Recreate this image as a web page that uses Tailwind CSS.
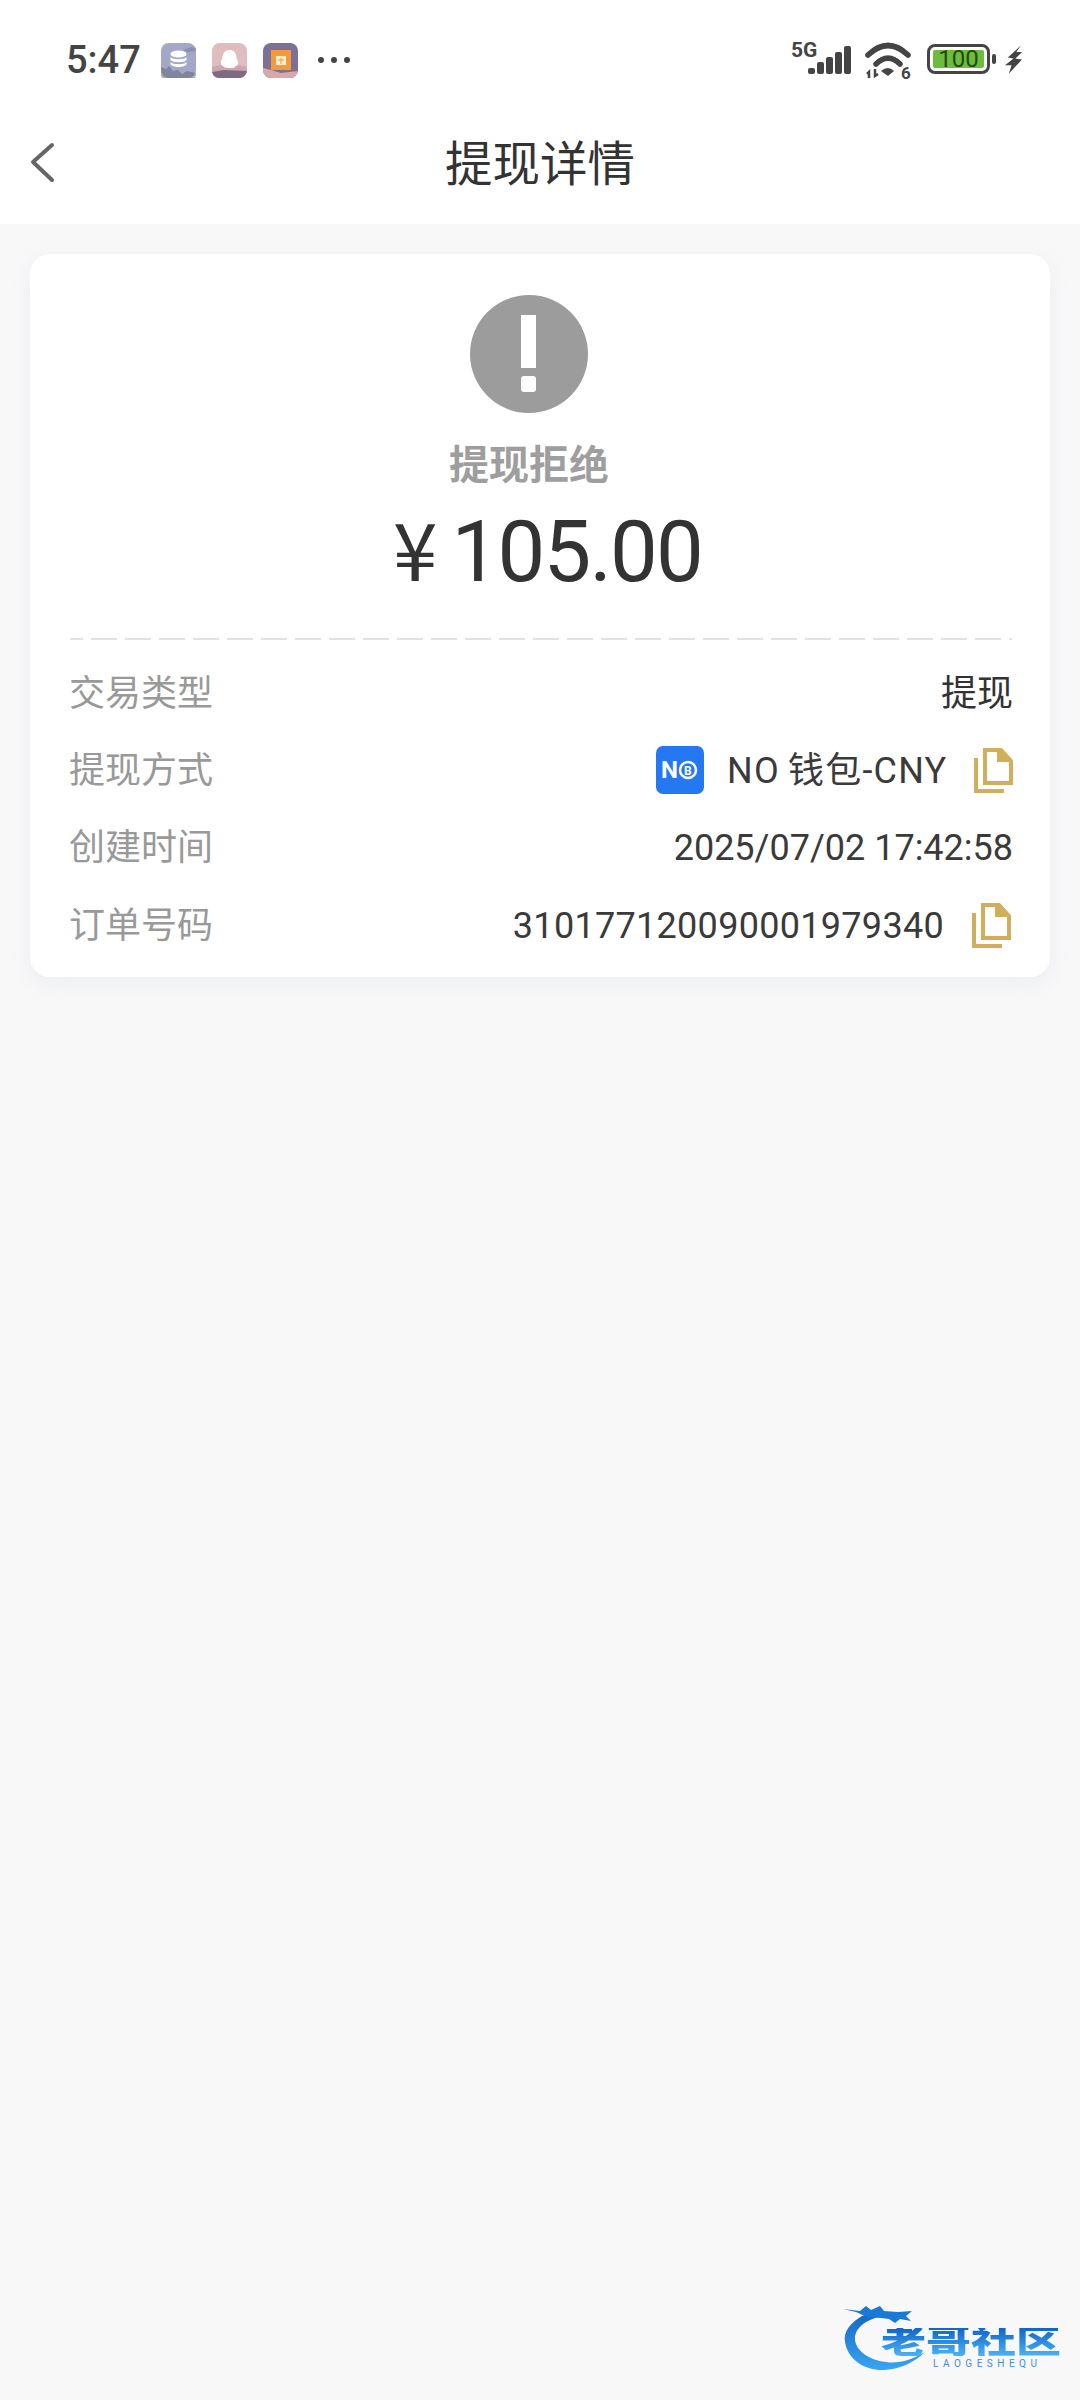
<!DOCTYPE html>
<html lang="zh-CN">
<head>
    <meta charset="UTF-8">
    <meta name="viewport" content="width=device-width, initial-scale=1.0">
    <title>提现详情</title>
    <script src="https://cdn.jsdelivr.net/npm/@tailwindcss/browser@4"></script>
</head>
<body class="bg-[#f8f8f9] font-['Roboto','Noto_Sans_CJK_SC',sans-serif]">
    <div class="relative h-[2400px] w-[1080px] overflow-hidden">

        <!-- STATUS BAR -->
        <div class="h-[104px] bg-white flex items-start justify-between pt-[36px] pl-[66px] pr-[58px]">
            <div class="flex items-center h-[48px]">
                <span class="text-[38px] leading-[48px] font-medium text-[#444] w-[95px]">5:47</span>
                <div class="flex items-center gap-[16px]">
                    <svg class="w-[35px] h-[35px]" viewBox="0 0 35 35">
                        <rect width="35" height="35" rx="8" fill="#a3a8c6"/>
                        <path d="M0 24l5 2 3-3 4 5 5-1 4 4 5-3 9 2v1a8 8 0 0 1-8 8H8a8 8 0 0 1-8-8z" fill="#5d6178" opacity=".5"/>
                        <path d="M22 7l8-3 5 1v3l-8 1z" fill="#7c80a0" opacity=".6"/>
                        <ellipse cx="17.500" cy="11" rx="8" ry="3.600" fill="#fff"/>
                        <path d="M9.500 14c2 3 14 3 16 0v3c-2 3-14 3-16 0zM9.500 19c2 3 14 3 16 0v2c-1 4-15 4-16 0z" fill="#fff"/>
                    </svg>
                    <svg class="w-[35px] h-[35px]" viewBox="0 0 35 35">
                        <rect width="35" height="35" rx="8" fill="#dfbcbe"/>
                        <path d="M0 24l9-2h17l9 2v3a8 8 0 0 1-8 8H8a8 8 0 0 1-8-8z" fill="#cfa6ae"/>
                        <path d="M0 29l12-2 23 1v-1 0a8 8 0 0 1-8 8H8a8 8 0 0 1-8-6z" fill="#7d6a83"/>
                        <path d="M17.500 7c5 0 7 4 7 8 2 3 2 6 1 7-1 2-2 0-2 1 0 1-1 2-6 2s-6-1-6-2c0-1-1 1-2-1-1-1-1-4 1-7 0-4 2-8 7-8z" fill="#fff"/>
                    </svg>
                    <svg class="w-[35px] h-[35px]" viewBox="0 0 35 35">
                        <rect width="35" height="35" rx="8" fill="#7c7095"/>
                        <path d="M0 25l8 2 10 3 17-2v-1 0a8 8 0 0 1-8 8H8a8 8 0 0 1-8-8z" fill="#d8a9a9"/>
                        <rect x="8" y="7" width="20" height="20" fill="#f59a3c"/>
                        <rect x="13" y="13" width="10" height="9" fill="#fdeecb"/>
                        <path d="M15 17h6M18 15v6" stroke="#e0a050" stroke-width="1"/>
                    </svg>
                </div>
                <div class="flex gap-[7px] ml-[20px]">
                    <span class="w-[6px] h-[6px] rounded-full bg-[#444]"></span>
                    <span class="w-[6px] h-[6px] rounded-full bg-[#444]"></span>
                    <span class="w-[6px] h-[6px] rounded-full bg-[#444]"></span>
                </div>
            </div>
            <div class="flex items-start pt-[2px]">
                <!-- signal -->
                <div class="relative w-[64px] h-[38px]">
                    <span class="absolute left-0 top-[3px] text-[21px] leading-[19px] font-bold text-[#444]">5G</span>
                    <svg class="w-[64px] h-[38px]" viewBox="0 0 64 38">
                        <rect x="17" y="30" width="7" height="6" rx="2" fill="#444"/>
                        <rect x="26" y="24" width="7" height="12" rx="2" fill="#444"/>
                        <rect x="35" y="19" width="7" height="17" rx="2" fill="#444"/>
                        <rect x="44" y="14" width="7" height="22" rx="2" fill="#444"/>
                        <rect x="53" y="8" width="7" height="28" rx="2" fill="#444"/>
                    </svg>
                </div>
                <!-- wifi -->
                <div class="relative w-[48px] h-[42px] ml-[10px]">
                    <svg class="w-[48px] h-[42px]" viewBox="0 0 48 42">
                        <path d="M3 17Q23 -2 43 17" fill="none" stroke="#444" stroke-width="5.500" stroke-linecap="round"/>
                        <path d="M11 26Q23 14 35 26" fill="none" stroke="#444" stroke-width="5.500" stroke-linecap="round"/>
                        <path d="M16 33Q23 27 29 33L23 38z" fill="#444"/>
                        <path d="M4 40v-6l-2 2M10 31v7l3-2" fill="none" stroke="#444" stroke-width="2.500"/>
                    </svg>
                    <span class="absolute left-[36px] top-[27px] text-[17px] leading-[16px] font-bold text-[#444]">6</span>
                </div>
                <!-- battery -->
                <div class="flex items-center ml-[14px] mt-[6px]">
                    <div class="w-[63px] h-[30px] border-[3px] border-[#444] rounded-[8px] p-[3px] flex">
                        <div class="flex-1 bg-[#6dbd3c] rounded-[2px] flex items-center justify-center text-[24px] leading-none text-[#1f4a12]">100</div>
                    </div>
                    <span class="w-[4px] h-[10px] bg-[#444] rounded-[2px] ml-[2px]"></span>
                </div>
                <svg class="w-[17px] h-[31px] ml-[9px] mt-[6px]" viewBox="0 0 18 30">
                    <path d="M17 0L3 13l6 1-9 7h7l-3 9 14-15-7-1 7-7h-6z" fill="#444"/>
                </svg>
            </div>
        </div>

        <!-- NAV -->
        <div class="relative h-[120px] bg-white flex items-center justify-center">
            <svg class="absolute left-[28px] top-[37px] w-[28px] h-[42px]" viewBox="0 0 28 42">
                <path d="M24 4L5 21l19 18" fill="none" stroke="#666" stroke-width="4" stroke-linecap="round" stroke-linejoin="round"/>
            </svg>
            <h1 class="text-[47.500px] leading-none font-normal text-[#333] mt-[3px]">提现详情</h1>
        </div>

        <!-- CARD -->
        <div class="mx-[30px] mt-[30px] h-[723px] bg-white rounded-[20px] shadow-[0_6px_20px_rgba(190,200,215,0.22)] flex flex-col">
            <div class="flex flex-col items-center pt-[41px]">
                <div class="w-[118px] h-[118px] mr-[23px] rounded-full bg-[#9c9c9c] flex flex-col items-center pt-[20px]">
                    <span class="w-[15px] h-[53px] bg-white"></span>
                    <span class="w-[15px] h-[16px] bg-white rounded-[3px] mt-[8px]"></span>
                </div>
                <p class="mt-[28px] mr-[22px] text-[40px] leading-[50px] font-bold text-[#9e9e9e]">提现拒绝</p>
                <p class="mt-[7px] ml-[15px] flex items-baseline text-[#333] leading-[96px]">
                    <span class="text-[80px] mr-[14px] font-['Noto_Sans_CJK_SC',sans-serif]">¥</span><span class="text-[85px] tracking-[-1.800px]">105.00</span>
                </p>
            </div>

            <svg class="mx-[40px] mt-[38px] w-[942px] h-[2px] shrink-0" viewBox="0 0 942 2">
                <line x1="0" y1="1" x2="942" y2="1" stroke="#e2e2e2" stroke-width="2" stroke-dasharray="26 8" stroke-dashoffset="13"/>
            </svg>

            <div class="ml-[39px] mr-[37px] mt-[15px] text-[36px] leading-[50px] text-[#333]">
                <div class="h-[77.300px] flex items-center justify-between">
                    <span class="text-[#999]">交易类型</span>
                    <span>提现</span>
                </div>
                <div class="h-[77.300px] flex items-center justify-between">
                    <span class="text-[#999]">提现方式</span>
                    <span class="flex items-center">
                        <svg class="w-[48px] h-[48px] -mt-[2px]" viewBox="0 0 48 48">
                            <rect width="48" height="48" rx="7" fill="#2479f2"/>
                            <text x="5" y="32" font-family="Roboto" font-weight="700" font-size="24" fill="#fff">N</text>
                            <circle cx="32" cy="24" r="8" fill="none" stroke="#fff" stroke-width="2.500"/>
                            <text x="28" y="29" font-family="Roboto" font-weight="700" font-size="12" fill="#fff">B</text>
                        </svg>
                        <span class="ml-[23px] w-[221px] whitespace-nowrap tracking-[1.200px] [word-spacing:-2px] text-[#3a3a3a]">NO 钱包-CNY</span>
                        <svg class="ml-[26px] w-[39px] h-[45px]" viewBox="0 0 39 45">
                            <path d="M2 10v33h28" fill="none" stroke="#d0ae5c" stroke-width="4"/>
                            <path d="M11 2h16l10 11v22H11z" fill="none" stroke="#d0ae5c" stroke-width="4"/>
                            <path d="M23 1h5l10 11v2H23z" fill="#d0ae5c"/>
                        </svg>
                    </span>
                </div>
                <div class="h-[77.300px] flex items-center justify-between">
                    <span class="text-[#999]">创建时间</span>
                    <span class="text-[#3a3a3a]">2025/07/02 17:42:58</span>
                </div>
                <div class="h-[77.300px] flex items-center justify-between">
                    <span class="text-[#999]">订单号码</span>
                    <span class="flex items-center pr-[2px]">
                        <span class="text-[#3a3a3a] tracking-[0.300px]">310177120090001979340</span>
                        <svg class="ml-[28px] w-[39px] h-[45px]" viewBox="0 0 39 45">
                            <path d="M2 10v33h28" fill="none" stroke="#d0ae5c" stroke-width="4"/>
                            <path d="M11 2h16l10 11v22H11z" fill="none" stroke="#d0ae5c" stroke-width="4"/>
                            <path d="M23 1h5l10 11v2H23z" fill="#d0ae5c"/>
                        </svg>
                    </span>
                </div>
            </div>
        </div>

        <!-- WATERMARK -->
        <div class="absolute left-[840px] top-[2300px] w-[226px] h-[72px]">
            <svg class="absolute left-0 top-0 w-[100px] h-[72px]" viewBox="0 0 100 72">
                <defs>
                    <linearGradient id="dragonFill" x1="0" y1="0" x2="0" y2="1">
                        <stop offset="0" stop-color="#1668c4"/>
                        <stop offset="1" stop-color="#39a5f2"/>
                    </linearGradient>
                </defs>
                <path d="M26 14C10 22 3 32 5 42C8 60 25 71 45 70C60 69 75 62 85 52C72 60 58 64 46 62C28 60 16 50 15 40C14 30 22 22 38 17z" fill="url(#dragonFill)"/>
                <path d="M3 9l17 2 6-5 5 4 9-4 4 5 14 1 14-1-6 5 5 5-11-2-5 4-6-4-8-1-14-1-11-5z" fill="#1a78d6"/>
            </svg>
            <p class="absolute left-[41px] top-[22px] text-[45px] leading-[40px] scale-y-[0.72] font-black whitespace-nowrap text-transparent bg-clip-text bg-gradient-to-b from-[#0f63c8] to-[#4cb4f5]">老哥社区</p>
            <p class="absolute left-[93px] top-[60px] text-[10px] leading-[8px] tracking-[4.500px] text-[#3c8fdc] whitespace-nowrap">LAOGESHEQU</p>
        </div>
    </div>
</body>
</html>
